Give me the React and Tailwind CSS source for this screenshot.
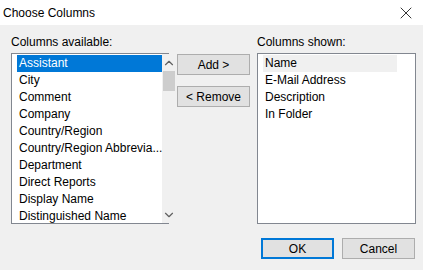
import { X, ChevronUp, ChevronDown } from 'lucide-react';

const available = [
    'Assistant',
    'City',
    'Comment',
    'Company',
    'Country/Region',
    'Country/Region Abbrevia...',
    'Department',
    'Direct Reports',
    'Display Name',
    'Distinguished Name',
];

const shown = ['Name', 'E-Mail Address', 'Description', 'In Folder'];

const WinButton = ({ children, primary }) => (
    <button
        className={`w-[73px] h-[21px] bg-[#e1e1e1] text-[12px] leading-none text-black ${primary
                ? 'border-2 border-[#0078d7]'
                : 'border border-[#adadad]'
            }`}
    >
        {children}
    </button>
);

export default function App() {
    return (
        <div className="w-[423px] h-[270px] bg-[#f0f0f0] font-['Liberation_Sans',Arial,sans-serif] text-[12px] text-black flex flex-col">
            {/* Title bar */}
            <div className="h-[25px] bg-white flex items-center justify-between pl-[3px] pr-[7px]">
                <span className="text-[12px]">Choose Columns</span>
                <X size={20} strokeWidth={1.1} className="text-[#222]" />
            </div>

            <div className="flex pl-[11px] pt-[11px]">
                {/* Available */}
                <div className="flex flex-col w-[158px]">
                    <div className="h-[17px] leading-[13px]">Columns available:</div>
                    <div className="h-[171px] bg-white border border-[#828790] flex">
                        <div className="flex-1 pl-[5px] pt-[1px]">
                            {available.map((item, i) => (
                                <div
                                    key={item}
                                    className={`h-[17px] leading-[17px] pl-[2px] whitespace-nowrap ${i === 0 ? 'bg-[#0078d7] text-white' : ''}`}
                                >
                                    {item}
                                </div>
                            ))}
                        </div>
                        {/* Scrollbar */}
                        <div className="w-[17px] bg-[#f0f0f0] flex flex-col">
                            <div className="h-[17px] flex items-center justify-center">
                                <ChevronUp size={14} strokeWidth={2} className="text-[#606060]" />
                            </div>
                            <div className="h-[20px] bg-[#cdcdcd] mx-[1px]" />
                            <div className="flex-1" />
                            <div className="h-[17px] flex items-center justify-center">
                                <ChevronDown size={14} strokeWidth={2} className="text-[#606060]" />
                            </div>
                        </div>
                    </div>
                </div>

                {/* Buttons */}
                <div className="flex flex-col gap-[11px] ml-[8px] pt-[18px]">
                    <WinButton>Add &gt;</WinButton>
                    <WinButton>&lt; Remove</WinButton>
                </div>

                {/* Shown */}
                <div className="flex flex-col w-[159px] ml-[7px]">
                    <div className="h-[17px] leading-[13px]">Columns shown:</div>
                    <div className="h-[171px] bg-white border border-[#828790] pl-[5px] pr-[18px] pt-[1px]">
                        {shown.map((item, i) => (
                            <div
                                key={item}
                                className={`h-[17px] leading-[17px] pl-[2px] ${i === 0 ? 'bg-[#f0f0f0]' : ''}`}
                            >
                                {item}
                            </div>
                        ))}
                    </div>
                </div>
            </div>

            <div className="flex justify-end gap-[8px] pr-[8px] pt-[14px]">
                <WinButton primary>OK</WinButton>
                <WinButton>Cancel</WinButton>
            </div>
        </div>
    );
}
